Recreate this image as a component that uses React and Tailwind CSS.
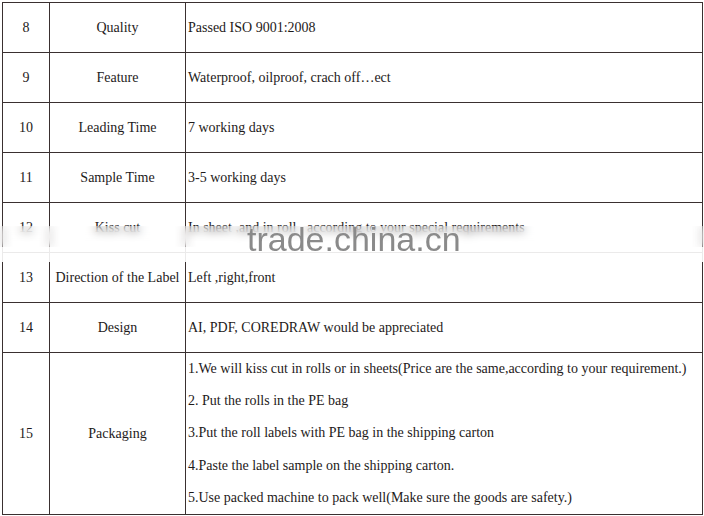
import React from 'react';

const rows = [
  { no: '8', name: 'Quality', value: 'Passed ISO 9001:2008' },
  { no: '9', name: 'Feature', value: 'Waterproof, oilproof, crach off\u2026ect' },
  { no: '10', name: 'Leading Time', value: '7 working days' },
  { no: '11', name: 'Sample Time', value: '3-5 working days' },
  { no: '12', name: 'Kiss cut', value: 'In sheet ,and in roll , according to your special requirements' },
  { no: '13', name: 'Direction of the Label', value: 'Left ,right,front' },
  { no: '14', name: 'Design', value: 'AI, PDF, COREDRAW would be appreciated' },
];

const packing = [
  '1.We will kiss cut in rolls or in sheets(Price are the same,according to your requirement.)',
  '2.  Put the rolls in the PE bag',
  '3.Put the roll labels with PE bag in the shipping carton',
  '4.Paste the label sample on the shipping carton.',
  '5.Use packed machine to pack well(Make sure the goods are safety.)',
];

const cell = 'border-r border-b border-[#3a3030] flex items-center';

export default function App() {
  return (
    <div className="relative w-[704px] h-[516px] bg-white overflow-hidden pt-[2px] pl-[2px] text-[14px] text-[#1e1a1a] [font-family:'Liberation_Serif','Times_New_Roman',serif]">
      <div className="grid grid-cols-[47px_136px_517px] border-l border-t border-[#3a3030] w-[701px]">
        {rows.map((r) => (
          <React.Fragment key={r.no}>
            <div className={`${cell} h-[50px] justify-center`}>{r.no}</div>
            <div className={`${cell} h-[50px] justify-center whitespace-nowrap`}>{r.name}</div>
            <div className={`${cell} h-[50px] pl-[2px] whitespace-nowrap`}>{r.value}</div>
          </React.Fragment>
        ))}
        <div className={`${cell} h-[162px] justify-center`}>15</div>
        <div className={`${cell} h-[162px] justify-center`}>Packaging</div>
        <div className="border-r border-b border-[#3a3030] h-[162px] pl-[2px] flex flex-col justify-around whitespace-nowrap leading-none">
          {packing.map((p) => (
            <div key={p}>{p}</div>
          ))}
        </div>
      </div>

      {/* watermark band */}
      <div className="absolute left-0 top-[226px] w-full h-[21px] backdrop-blur-[4px] bg-white/20" />
      <div className="absolute left-0 top-[247px] w-full h-[15px] bg-white/90" />
      <div className="absolute left-[247px] top-[222px] text-[34px] leading-none text-[#8a8a8a] [font-family:'Liberation_Sans',Arial,sans-serif]">
        trade.china.cn
      </div>
    </div>
  );
}
